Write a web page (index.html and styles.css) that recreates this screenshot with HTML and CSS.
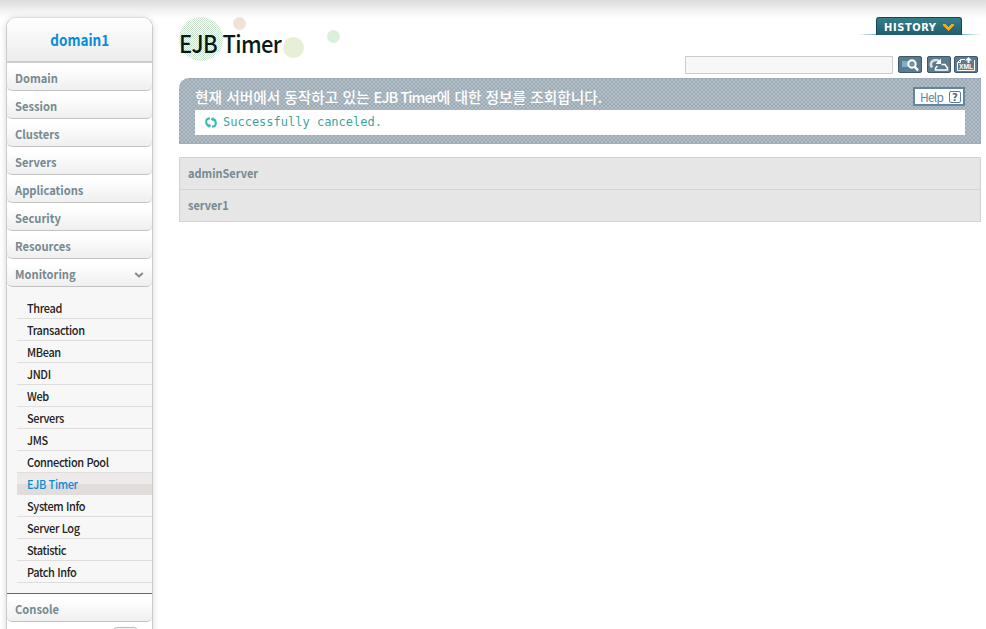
FILE: index.html
```html
<!DOCTYPE html>
<html lang="ko">
<head>
<meta charset="utf-8">
<title>EJB Timer</title>
<link rel="stylesheet" href="styles.css">
</head>
<body>
<div class="page">
  <nav class="sidebar">
    <div class="brand"><span>domain1</span></div>
    <a class="menu"><span>Domain</span></a>
    <a class="menu"><span>Session</span></a>
    <a class="menu"><span>Clusters</span></a>
    <a class="menu"><span>Servers</span></a>
    <a class="menu"><span>Applications</span></a>
    <a class="menu"><span>Security</span></a>
    <a class="menu"><span>Resources</span></a>
    <a class="menu"><span>Monitoring</span>
      <svg class="chevron" width="10" height="6" viewBox="0 0 10 6"><path d="M1.2 1 L5 4.4 L8.8 1" fill="none" stroke="#888" stroke-width="2"/></svg>
    </a>
    <div class="submenu">
      <a><span>Thread</span></a>
      <a><span>Transaction</span></a>
      <a><span>MBean</span></a>
      <a><span>JNDI</span></a>
      <a><span>Web</span></a>
      <a><span>Servers</span></a>
      <a><span>JMS</span></a>
      <a><span>Connection Pool</span></a>
      <a class="active"><span>EJB Timer</span></a>
      <a><span>System Info</span></a>
      <a><span>Server Log</span></a>
      <a><span>Statistic</span></a>
      <a><span>Patch Info</span></a>
    </div>
    <a class="menu"><span>Console</span></a>
    <div class="stub"></div>
  </nav>
  <main class="content">
    <header class="top">
      <h1 class="title">
        <svg class="dots" width="170" height="50" viewBox="0 0 170 50">
          <defs><pattern id="mesh" width="2" height="2" patternUnits="userSpaceOnUse"><path d="M0 0h1v1h-1zM1 1h1v1h-1z" fill="#c9e2ce" shape-rendering="crispEdges"/></pattern></defs>
          <circle cx="22" cy="22" r="22" fill="url(#mesh)"/>
          <circle cx="60.500" cy="6.500" r="6.500" fill="#efe3d9"/>
          <circle cx="114.500" cy="30.500" r="10.500" fill="#e8efd8"/>
          <circle cx="154.500" cy="19.500" r="6.500" fill="#daf0dc"/>
        </svg>
        <span>EJB Timer</span>
      </h1>
      <div class="tools">
        <div class="history"><div class="tab"><span>HISTORY</span>
          <svg width="11" height="7" viewBox="0 0 11 7"><path d="M0 0h3v1h1v1h1v1h1v-1h1v-1h1v-1h3v2h-1v1h-1v1h-1v1h-1v1h-1v1h-1v-1h-1v-1h-1v-1h-1v-1h-1v-1h-1z" fill="#ffa514" shape-rendering="crispEdges"/></svg>
        </div></div>
        <div class="search">
          <input class="field" type="text" aria-label="Search">
          <svg class="btn" width="24" height="17" viewBox="0 0 24 17">
            <rect x=".5" y=".5" width="23" height="16" rx="1.500" fill="#5c7b8c" stroke="#3d596b"/>
            <path d="M4 5h8v6H4z" fill="#79b0d0"/><circle cx="14" cy="8" r="3.700" fill="#7293a7" stroke="#fff" stroke-width="2"/><path d="M16.500 10.500l3.500 4" stroke="#fff" stroke-width="2.500"/>
          </svg>
          <svg class="btn" width="24" height="17" viewBox="0 0 24 17">
            <rect x=".5" y=".5" width="23" height="16" rx="1.500" fill="#5c7b8c" stroke="#3d596b"/>
            <path d="M5 11.500C2.500 8 4.500 4 9 4q2 0 3 1.500" fill="none" stroke="#d7dfe4" stroke-width="2.500"/><path d="M14 2.500V8H8.500z" fill="#fff"/><path d="M14.500 8.500H18l2.500 3.500v2H8.500v-2l2-2" fill="none" stroke="#fff" stroke-width="1.500"/>
          </svg>
          <svg class="btn xml" width="24" height="17" viewBox="0 0 24 17">
            <rect x=".5" y=".5" width="23" height="16" rx="1.500" fill="#5c7b8c" stroke="#3d596b"/>
            <path d="M11 3.500H6.500L3.500 6.500v8h17V4" fill="none" stroke="#fff"/><path d="M4 6.500h2.500V4" fill="none" stroke="#fff"/><path d="M14.500 1l3.500 3.500h-2.500V7h-2V4.500H11z" fill="#fff"/>
            <text class="xml-label" x="5" y="13.200" textLength="14" lengthAdjust="spacingAndGlyphs">XML</text>
          </svg>
        </div>
      </div>
    </header>
    <section class="banner">
      <div class="intro"><p>현재 서버에서 동작하고 있는 <span>EJB Timer</span>에 대한 정보를 조회합니다.</p>
        <a class="help"><span>Help</span><svg width="12" height="12" viewBox="0 0 12 12"><rect x=".5" y=".5" width="11" height="11" rx="1.500" fill="#fff" stroke="#617d96"/><text class="mark" x="6" y="9.600" text-anchor="middle">?</text></svg></a>
      </div>
      <div class="message">
        <svg width="12" height="11" viewBox="0 0 12 11"><path d="M5 1.500H3.500Q1.200 2 1.200 5T4 9M7 9.500H8.500Q10.800 9 10.800 6T8 2" fill="none" stroke="#35bbae" stroke-width="2"/><path d="M3.500 6.500v4.500l3-2.300zM8.500 0v4.500L5.500 2.300z" fill="#35bbae"/></svg>
        <span>Successfully canceled.</span>
      </div>
    </section>
    <div class="servers">
      <div class="server"><span>adminServer</span></div>
      <div class="server second"><span>server1</span></div>
    </div>
  </main>
</div>
</body>
</html>
```
FILE: styles.css
```css
* { box-sizing: border-box; }
body {
  margin: 0;
  height: 629px;
  overflow: hidden;
  font-family: "Noto Sans CJK KR", "Noto Sans", sans-serif;
  background: linear-gradient(#dcdcdc, #f1f1f1 10px, #fff 19px) no-repeat #fff;
}
svg { display: block; flex: none; }
.page { display: flex; height: 629px; }
.sidebar {
  width: 147px;
  height: 640px;
  margin: 17px 0 0 6px;
  flex: none;
  border: 1px solid #ccc;
  border-top-color: #ddd;
  border-radius: 10px 10px 0 0;
  background: #fff;
  box-shadow: 0 1px 6px rgba(0, 0, 0, .16);
}
/* Condensed lettering for navigation and headings */
.brand span, .menu span, .submenu span, .server span, .title span {
  display: inline-block;
  transform: scaleX(.915);
  transform-origin: 0 50%;
}
.brand {
  height: 45px;
  padding-left: 1px;
  border-bottom: 2px solid #ccc;
  border-radius: 9px 9px 0 0;
  background: linear-gradient(#fff, #ececec);
  color: #078cd8;
  font-size: 15px;
  font-weight: 700;
  line-height: 44px;
  text-align: center;
}
.brand span { transform: scaleX(.9); transform-origin: 50% 50%; }
.menu {
  display: flex;
  align-items: center;
  justify-content: space-between;
  height: 28px;
  padding: 2px 8px 0;
  border-bottom: 1px solid #c3c3c3;
  border-radius: 0 0 5px 5px;
  background: linear-gradient(#fff 20%, #efefef);
  color: #758a91;
  font-size: 12px;
  font-weight: 700;
  line-height: 25px;
}
.menu span { transform: scaleX(.93); }
.chevron { margin: 3px 0 0; }
.submenu {
  height: 307px;
  padding: 10px 0 0 10px;
  border-bottom: 1px solid #666;
  background: #f7f7f7;
}
.submenu a {
  display: block;
  height: 22px;
  padding-left: 10px;
  border-bottom: 1px solid #e0dddd;
  color: #222;
  font-size: 12px;
  font-weight: 500;
  line-height: 22px;
  letter-spacing: -.4px;
}
.submenu .active {
  color: #078cd8;
  background: linear-gradient(#eeeae9 50%, #e2dcda 50%);
}
.stub {
  width: 25px;
  height: 16px;
  margin: 5px 0 0 106px;
  border: 1px solid #bbb;
  border-radius: 4px;
  background: #f4f4f4;
}
.content { width: 802px; margin: 17px 0 0 26px; }
.top { display: flex; justify-content: space-between; height: 61px; }
.title {
  position: relative;
  margin: 0;
  color: #071b16;
  font-size: 24px;
  font-weight: 500;
  line-height: 52px;
  letter-spacing: -.7px;
  white-space: nowrap;
}
.title span { position: relative; }
.dots { position: absolute; left: 0; top: 0; }
.tools { display: flex; flex-direction: column; align-items: flex-end; }
.history {
  width: 123px;
  height: 18px;
  padding-left: 18px;
  background: linear-gradient(90deg, transparent, #77b5bd 18px, #77b5bd 105px, transparent) 0 17px / 100% 1px no-repeat;
}
.tab {
  display: flex;
  align-items: center;
  justify-content: space-between;
  width: 86px;
  height: 18px;
  padding: 2px 7px 0;
  border: 1px solid #174650;
  border-bottom: 0;
  border-radius: 3px 3px 0 0;
  background: linear-gradient(#347f89, #225e69);
  color: #fff;
  font: 700 11px/16px "DejaVu Sans Condensed", "DejaVu Sans", sans-serif;
  letter-spacing: .6px;
}
.search { display: flex; align-items: center; margin: 21px 3px 0 0; }
.field {
  width: 208px;
  height: 18px;
  margin: 0 5px 0 0;
  padding: 0 4px;
  border: 1px solid #ccc;
  background: #f7f7f7;
}
.search .btn { margin-top: -1px; }
.btn + .btn { margin-left: 5px; }
.btn + .xml { margin-left: 3px; }
.xml-label { fill: #fff; font: 700 7px "Liberation Sans", sans-serif; }
.banner {
  height: 66px;
  padding: 9px 15px 0 16px;
  border: 1px solid #9eadb9;
  border-width: 1px 1px 1px 0;
  border-radius: 10px 0 0 0;
  background: repeating-conic-gradient(#9daab3 0 25%, #b0bfc8 0 50%) 0 0 / 4px 4px;
}
.intro { display: flex; justify-content: space-between; height: 22px; }
.intro p { margin: 0; color: #fff; font-size: 14.7px; font-weight: 500; line-height: 18px; }
.intro p span { letter-spacing: -1px; }
.help {
  display: flex;
  align-items: center;
  justify-content: space-between;
  width: 52px;
  height: 19px;
  margin-top: -1px;
  padding: 0 2px 0 5px;
  border: 2px solid #6286a0;
  background: #fff;
  color: #6286a0;
  font-size: 12px;
  line-height: 15px;
}
.help span { margin-top: -1px; letter-spacing: -.8px; }
.mark { fill: #496c8b; font: 700 10px "DejaVu Sans", sans-serif; }
.message {
  display: flex;
  align-items: center;
  gap: 6px;
  height: 25px;
  padding: 0 10px;
  background: #fff;
  color: #3ba5a0;
  font: 12px/22px "DejaVu Sans Mono", monospace;
}
.message span { margin-top: -2px; }
.servers { margin-top: 13px; border: 1px solid #d3d3d3; background: #e6e6e6; }
.server {
  height: 32px;
  padding-left: 8px;
  color: #758a91;
  font-size: 12px;
  font-weight: 700;
  line-height: 29px;
}
.server:first-child { height: 31px; }
.second { border-top: 1px solid #d3d3d3; }
```
